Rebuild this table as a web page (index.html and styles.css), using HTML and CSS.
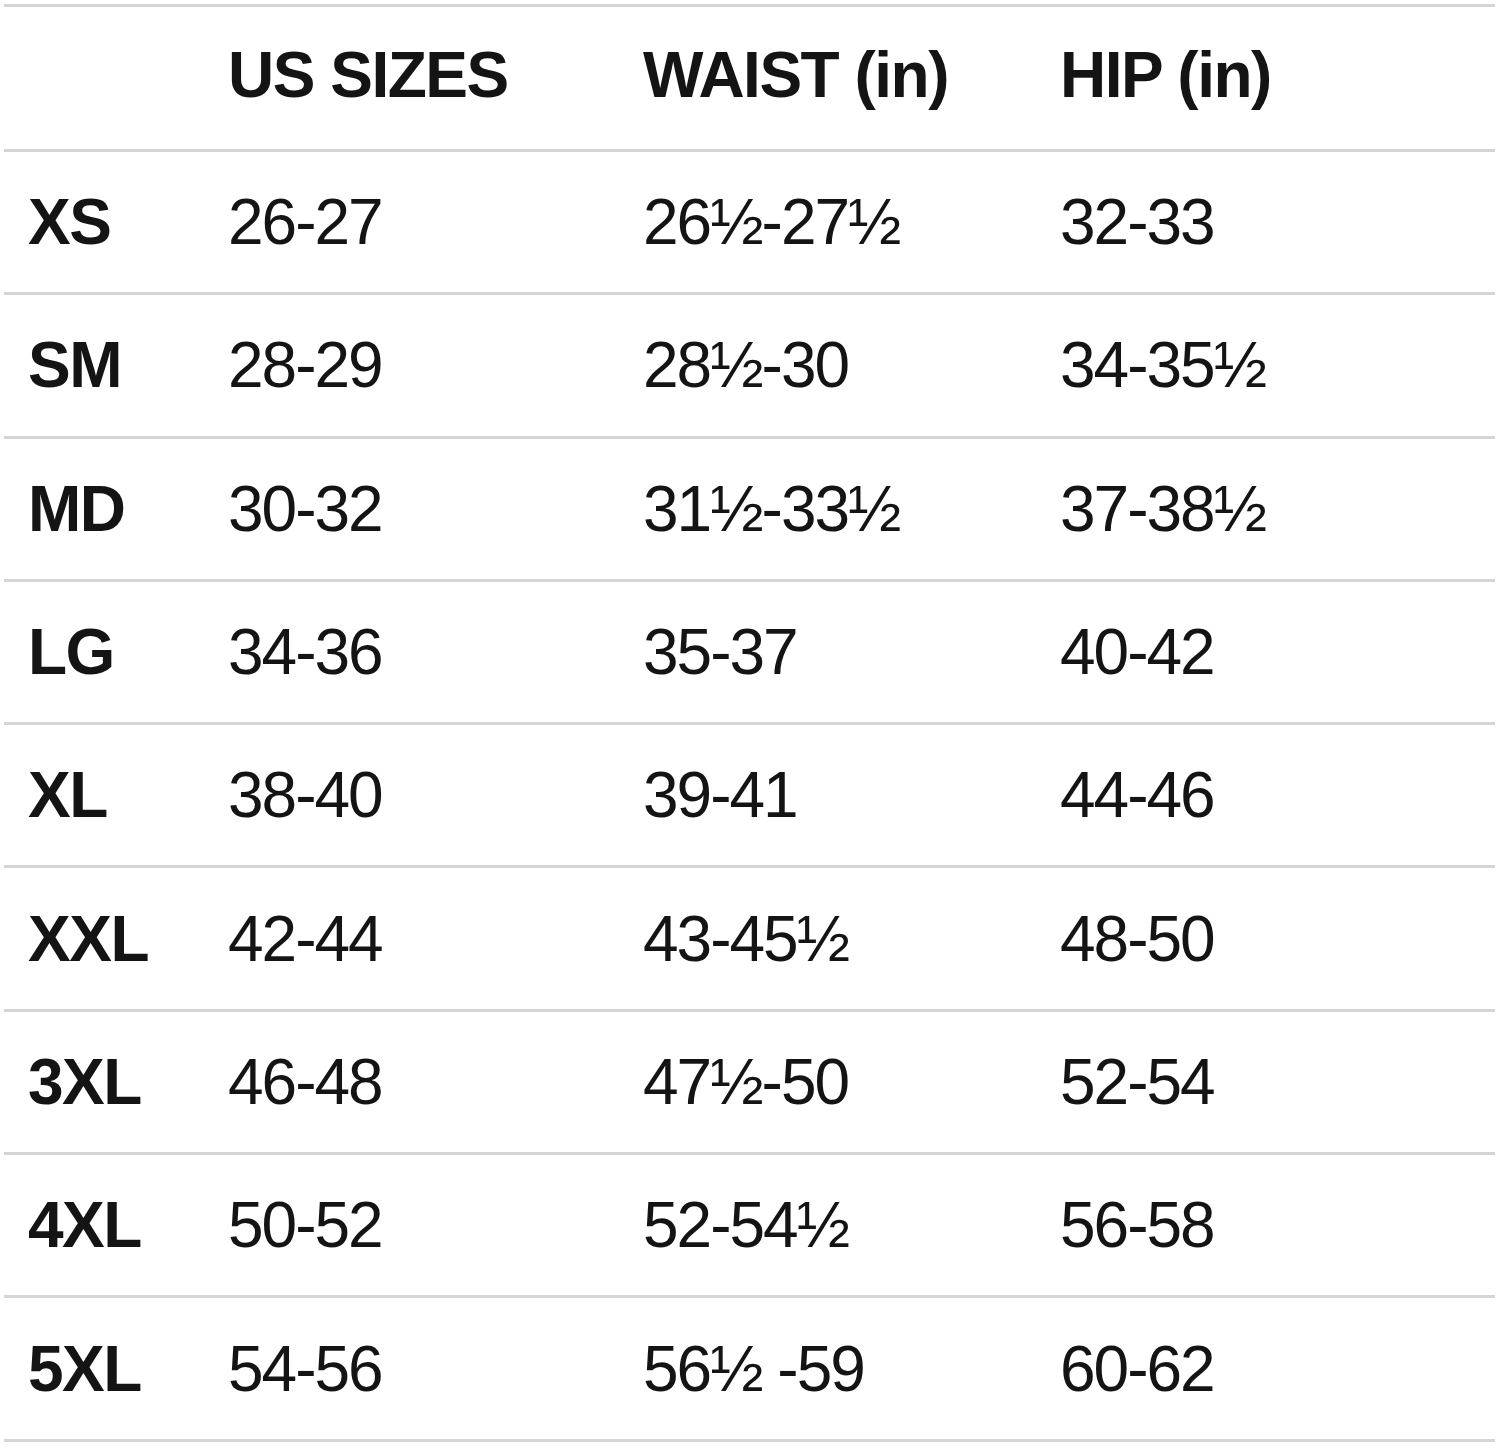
FILE: index.html
```html
<!DOCTYPE html>
<html lang="en">
<head>
<meta charset="utf-8">
<title>Size chart</title>
<link rel="stylesheet" href="styles.css">
</head>
<body>
<div class="chart">
  <div class="row head">
    <div class="cell"></div>
    <div class="cell">US SIZES</div>
    <div class="cell">WAIST (in)</div>
    <div class="cell">HIP (in)</div>
  </div>
  <div class="row"><div class="cell size">XS</div><div class="cell">26-27</div><div class="cell">26½-27½</div><div class="cell">32-33</div></div>
  <div class="row"><div class="cell size">SM</div><div class="cell">28-29</div><div class="cell">28½-30</div><div class="cell">34-35½</div></div>
  <div class="row"><div class="cell size">MD</div><div class="cell">30-32</div><div class="cell">31½-33½</div><div class="cell">37-38½</div></div>
  <div class="row"><div class="cell size">LG</div><div class="cell">34-36</div><div class="cell">35-37</div><div class="cell">40-42</div></div>
  <div class="row"><div class="cell size">XL</div><div class="cell">38-40</div><div class="cell">39-41</div><div class="cell">44-46</div></div>
  <div class="row"><div class="cell size">XXL</div><div class="cell">42-44</div><div class="cell">43-45½</div><div class="cell">48-50</div></div>
  <div class="row"><div class="cell size">3XL</div><div class="cell">46-48</div><div class="cell">47½-50</div><div class="cell">52-54</div></div>
  <div class="row"><div class="cell size">4XL</div><div class="cell">50-52</div><div class="cell">52-54½</div><div class="cell">56-58</div></div>
  <div class="row"><div class="cell size">5XL</div><div class="cell">54-56</div><div class="cell">56½ -59</div><div class="cell">60-62</div></div>
</div>
</body>
</html>
```
FILE: styles.css
```css
html, body {
  margin: 0;
  padding: 0;
  background: #ffffff;
}

.chart {
  margin: 4px 5px 0 4px;
  border-top: 3px solid #d5d5d5;
  font-family: "Liberation Sans", Arial, sans-serif;
  color: #141414;
}

.row {
  display: grid;
  grid-template-columns: 200px 415px 417px 1fr;
  align-items: center;
  height: 143.3px;
  box-sizing: border-box;
  border-bottom: 3px solid #d5d5d5;
  padding-left: 24px;
}

.row.head {
  height: 145px;
  padding-bottom: 6px;
}

.cell {
  font-size: 64px;
  line-height: 1;
  letter-spacing: -2px;
  white-space: nowrap;
}

.head .cell,
.size {
  font-weight: 700;
  letter-spacing: -1.5px;
}
```
